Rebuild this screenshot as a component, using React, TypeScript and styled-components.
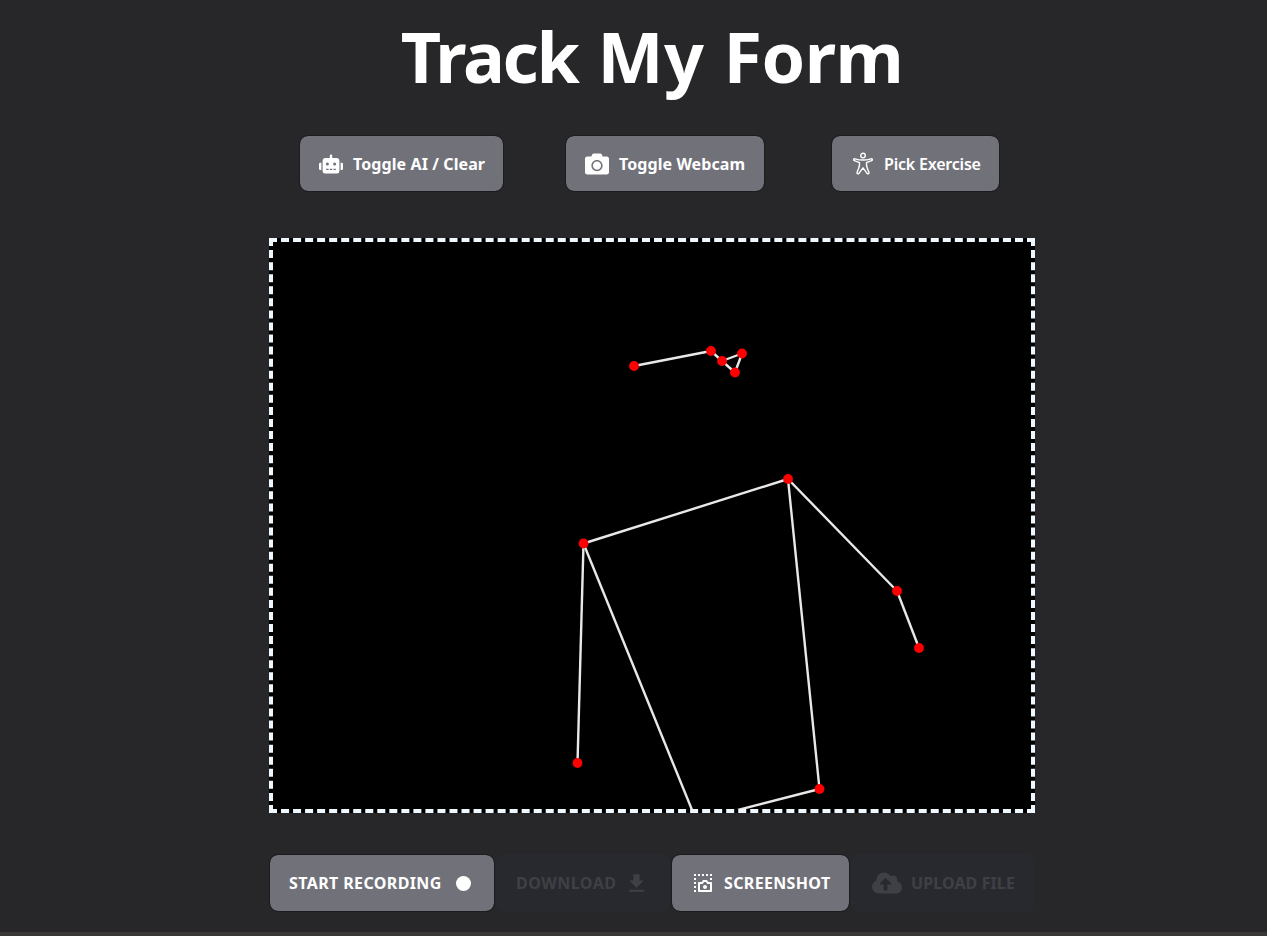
import React from 'react';
import styled, { createGlobalStyle } from 'styled-components';
import { FaRobot, FaCamera, FaCloudUploadAlt } from 'react-icons/fa';
import { RiScreenshot2Line } from 'react-icons/ri';
import { MdDownload } from 'react-icons/md';

const GlobalStyle = createGlobalStyle`
  * { box-sizing: border-box; }
  body {
    margin: 0;
    background: #27272a;
    overflow: hidden;
    font-family: "Segoe UI", "Noto Sans", "Open Sans", sans-serif;
  }
`;

const Page = styled.main`
  height: 936px;
  display: flex;
  flex-direction: column;
  padding-left: 269px;
`;

const Title = styled.h1`
  margin: 8px 0 0;
  width: 766px;
  height: 96px;
  display: flex;
  justify-content: center;
  white-space: nowrap;
  font-size: 70px;
  line-height: 96px;
  font-weight: 700;
  color: #fff;
`;

const Word = styled.span<{ $spacing: number; $gap?: number }>`
  letter-spacing: ${(p) => p.$spacing}px;
  margin-right: ${(p) => p.$gap ?? 0}px;
`;

const TopBar = styled.div`
  display: flex;
  gap: 61px;
  margin: 31px 0 0 30px;

  > :last-child {
    margin-left: 5px;
  }
`;

const BottomBar = styled.div`
  display: flex;
  gap: 1px;
  margin-top: 41px;
`;

const Button = styled.button<{ $width: number; $tall?: boolean }>`
  width: ${(p) => p.$width}px;
  height: ${(p) => (p.$tall ? 58 : 57)}px;
  display: flex;
  align-items: center;
  flex: none;
  padding: 0 0 0 19px;
  border: 1px solid #1b1c20;
  border-radius: 9px;
  background: #71717a;
  background-clip: padding-box;
  color: #fff;
  font: inherit;

  &:disabled {
    border-color: #28292e;
    background: #28292e;
    color: #3e4045;
  }

  svg {
    flex: none;
  }
`;

const Label = styled.span<{ $spacing: number; $weight?: number }>`
  font-size: 16px;
  line-height: 24px;
  font-weight: ${(p) => p.$weight ?? 700};
  letter-spacing: ${(p) => p.$spacing}px;
  white-space: nowrap;
`;

const IconSlot = styled.span<{ $before?: number; $after?: number }>`
  display: flex;
  margin-left: ${(p) => p.$before ?? 0}px;
  margin-right: ${(p) => p.$after ?? 0}px;
`;

const RecordDot = styled.span`
  width: 15px;
  height: 15px;
  border-radius: 50%;
  background: #fff;
`;

const Stage = styled.section`
  width: 766px;
  height: 575px;
  margin-top: 46px;
  border: 4px dashed aliceblue;
  background: #000;

  svg {
    display: block;
  }
`;

const Footer = styled.footer`
  height: 4px;
  margin: auto 0 0 -269px;
  background: #3a3837;
`;

const bones = [
  [634, 366, 711, 351],
  [711, 351, 722, 361],
  [722, 361, 742, 353.5],
  [742, 353.5, 735, 372.5],
  [735, 372.5, 722, 361],
  [583.5, 543.5, 788, 479],
  [788, 479, 897, 591],
  [897, 591, 919, 648],
  [788, 479, 819.5, 789],
  [583.5, 543.5, 577.5, 763],
  [583.5, 543.5, 701, 832],
  [819.5, 789, 660, 830],
];

const joints = [
  [634, 366],
  [711, 351],
  [722, 361],
  [742, 353.5],
  [735, 372.5],
  [788, 479],
  [583.5, 543.5],
  [897, 591],
  [919, 648],
  [577.5, 763],
  [819.5, 789],
];

function Pose() {
  return (
    <svg width="758" height="567" viewBox="273 242 758 567">
      <g stroke="#e8e8e8" strokeWidth="2.4">
        {bones.map(([x1, y1, x2, y2], i) => (
          <line key={i} x1={x1} y1={y1} x2={x2} y2={y2} />
        ))}
      </g>
      <g fill="#f00">
        {joints.map(([x, y], i) => (
          <circle key={i} cx={x} cy={y} r="4.9" />
        ))}
      </g>
    </svg>
  );
}

function PersonIcon() {
  return (
    <svg width="24" height="24" viewBox="0 0 24 24" fill="none" stroke="currentColor" strokeWidth="1.4" strokeLinecap="round" strokeLinejoin="round">
      <circle cx="12" cy="3.6" r="2.3" />
      <path d="M3.8 6.8 Q8 8 12 8 T20.2 6.8 C21.5 6.6 21.8 8.3 20.6 8.7 L15.5 10.6 Q15.2 13.5 16.3 16.2 L18 20.6 C18.2 21.8 16.5 22.3 15.9 21.2 L12 15.8 L8.1 21.2 C7.5 22.3 5.8 21.8 6 20.6 L7.7 16.2 Q8.8 13.5 8.5 10.6 L3.4 8.7 C2.2 8.3 2.5 6.6 3.8 6.8 Z" />
    </svg>
  );
}

export default function App() {
  return (
    <Page>
      <GlobalStyle />
      <Title>
        <Word $spacing={-2.3} $gap={20}>Track</Word>
        <Word $spacing={0.5} $gap={19}>My</Word>
        <Word $spacing={-0.5}>Form</Word>
      </Title>
      <TopBar>
        <Button $width={205}>
          <IconSlot $after={10}><FaRobot size={24} /></IconSlot>
          <Label $spacing={0.1}>Toggle AI / Clear</Label>
        </Button>
        <Button $width={200}>
          <IconSlot $after={10}><FaCamera size={24} /></IconSlot>
          <Label $spacing={0.08}>Toggle Webcam</Label>
        </Button>
        <Button $width={169}>
          <IconSlot $after={9}><PersonIcon /></IconSlot>
          <Label $spacing={-0.2} $weight={600}>Pick Exercise</Label>
        </Button>
      </TopBar>
      <Stage>
        <Pose />
      </Stage>
      <BottomBar>
        <Button $width={226} $tall>
          <Label $spacing={0.38}>START RECORDING</Label>
          <IconSlot $before={14}><RecordDot /></IconSlot>
        </Button>
        <Button $width={174} $tall disabled>
          <Label $spacing={0.5}>DOWNLOAD</Label>
          <IconSlot $before={8}><MdDownload size={25} /></IconSlot>
        </Button>
        <Button $width={179} $tall>
          <IconSlot $after={9}><RiScreenshot2Line size={24} /></IconSlot>
          <Label $spacing={0.35}>SCREENSHOT</Label>
        </Button>
        <Button $width={184} $tall disabled>
          <IconSlot $before={1} $after={9}><FaCloudUploadAlt size={30} /></IconSlot>
          <Label $spacing={0.1}>UPLOAD FILE</Label>
        </Button>
      </BottomBar>
      <Footer />
    </Page>
  );
}
